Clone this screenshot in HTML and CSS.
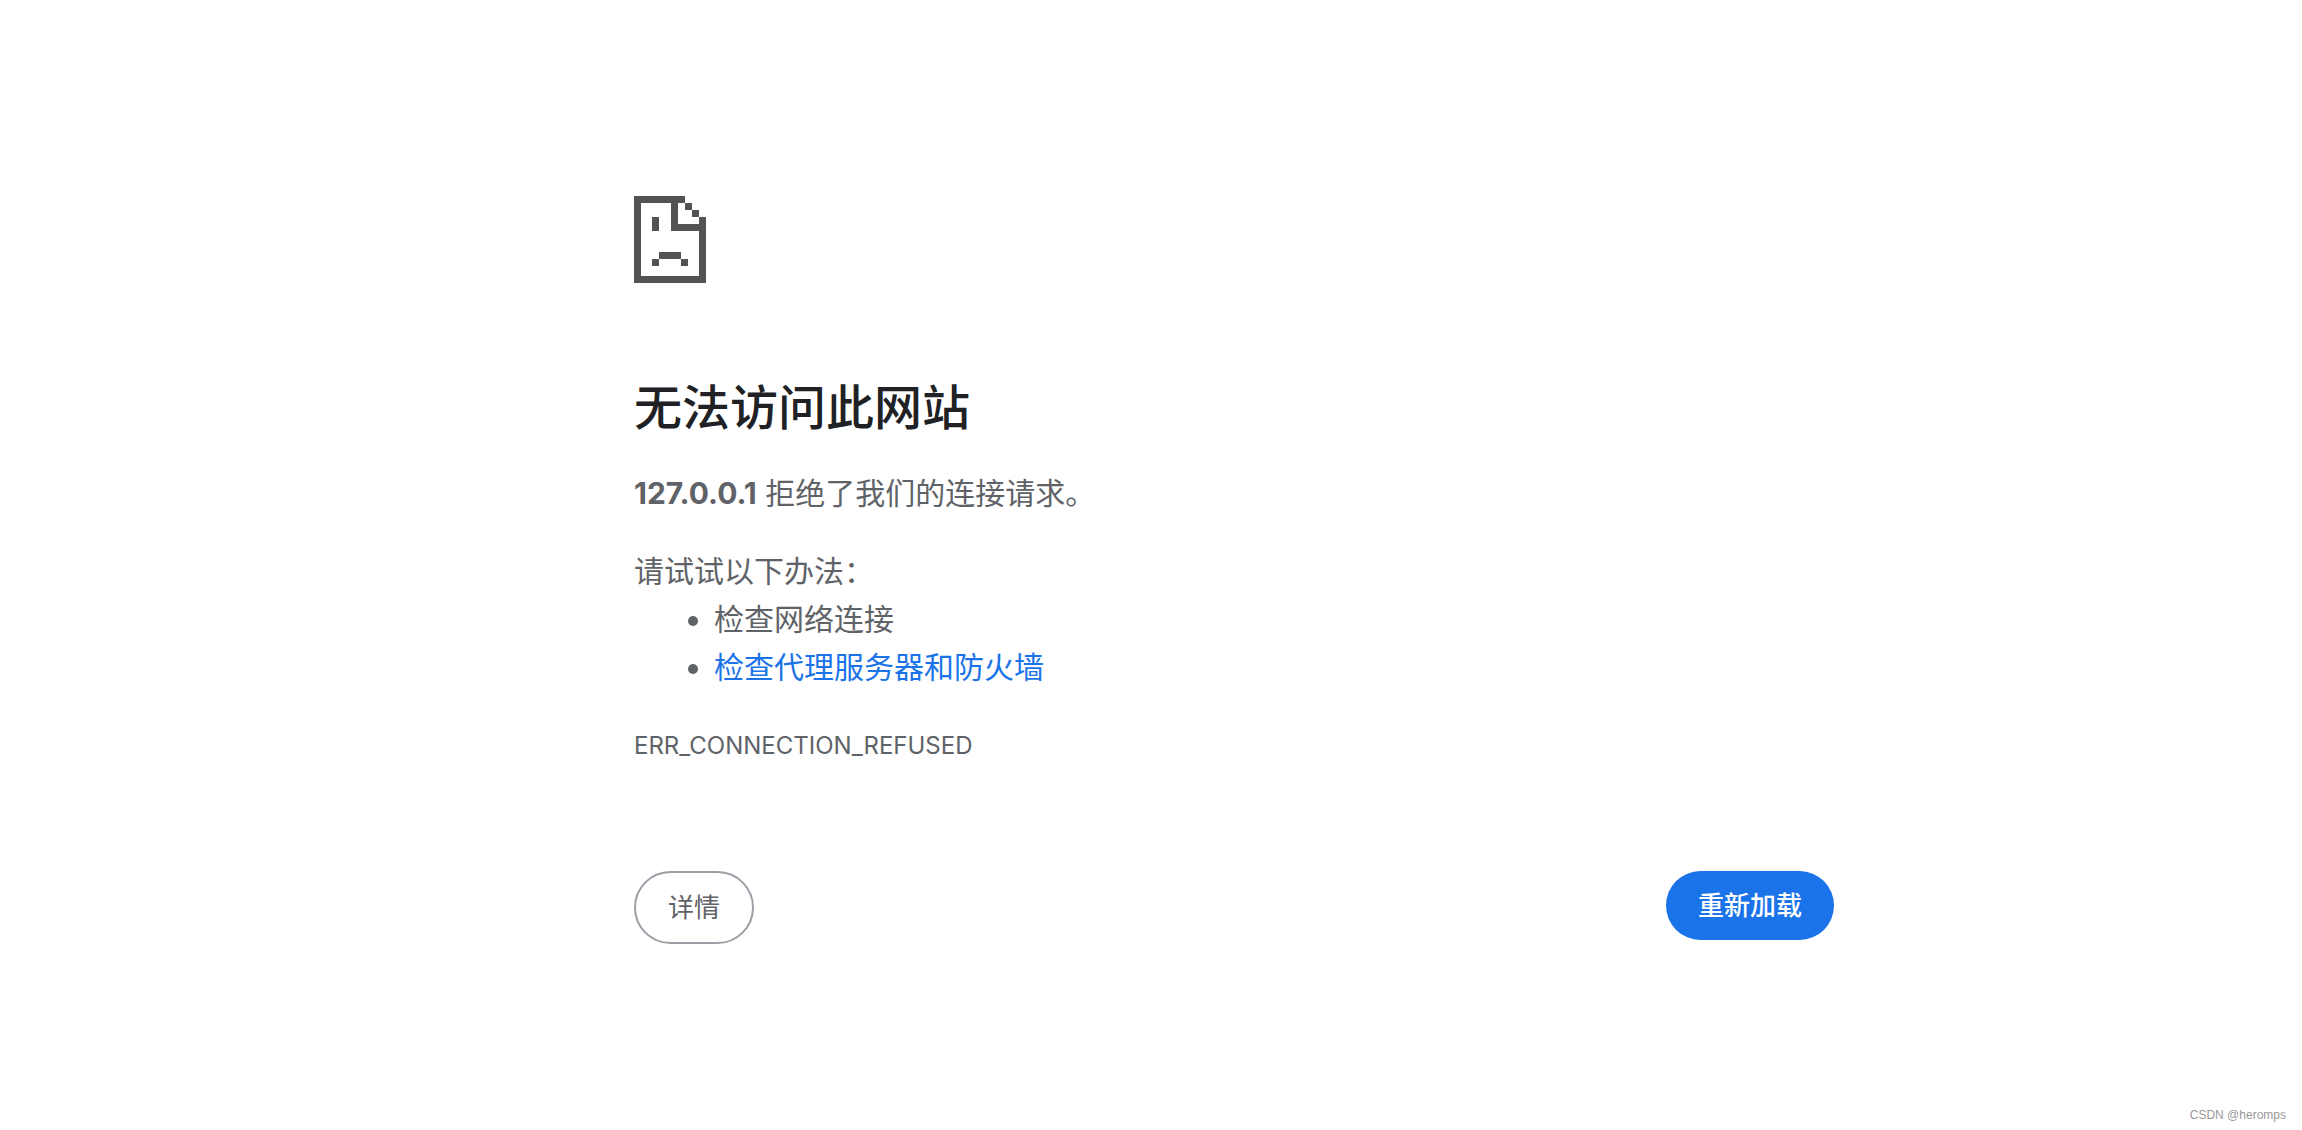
FILE: index.html
```html
<!DOCTYPE html>
<html lang="zh-CN">
<head>
  <meta charset="UTF-8">
  <meta name="viewport" content="width=device-width, initial-scale=1.0">
  <title>127.0.0.1</title>
  <link rel="stylesheet" href="styles.css">
</head>
<body>
  <main class="error-page">
    <svg class="icon" viewBox="0 0 216 261" fill="#535353" shape-rendering="crispEdges" aria-hidden="true">
      <!-- 纸张边框 -->
      <path d="M0 0H153V21H21V240H195V105H111V21H132V84H195V63H216V261H0Z"/>
      <!-- 折角 -->
      <path d="M153 21H174V42H153ZM174 42H195V63H174Z"/>
      <!-- 眼睛和嘴 -->
      <path d="M54 63H75V105H54ZM75 168H141V189H75ZM54 189H75V210H54ZM141 189H162V210H141Z"/>
    </svg>

    <h1>无法访问此网站</h1>
    <p class="summary"><strong>127.0.0.1</strong> 拒绝了我们的连接请求。</p>

    <div class="suggestions">
      <p>请试试以下办法：</p>
      <ul>
        <li>检查网络连接</li>
        <li><a href="#buttons">检查代理服务器和防火墙</a></li>
      </ul>
    </div>

    <div class="error-code">ERR_CONNECTION_REFUSED</div>

    <div class="buttons" id="buttons">
      <button type="button" class="details-button">详情</button>
      <button type="button" class="reload-button">重新加载</button>
    </div>
  </main>
  <div class="watermark">CSDN @heromps</div>
</body>
</html>
```
FILE: styles.css
```css
body {
  margin: 0;
  background: #fff;
  color: #5f6368;
  font-family: Inter, "Noto Sans CJK SC", sans-serif;
  font-size: 30px;
  line-height: 48px;
}

.error-page {
  max-width: 1200px;
  margin: 0 auto;
  padding: 196px 0 0 166px;
}

.icon {
  display: block;
  width: 72px;
  height: 87px;
}

h1 {
  margin: 95px 0 31px;
  color: #202124;
  font-size: 48px;
  font-weight: 500;
  line-height: 60px;
}

p {
  margin: 0;
}

.summary {
  margin-bottom: 30px;
}

ul {
  margin: 0;
  padding-left: 80px;
}

a {
  color: #1a73e8;
  text-decoration: none;
}

.error-code {
  margin-top: 36px;
  font-size: 24px;
  line-height: 38px;
}

.buttons {
  display: flex;
  justify-content: space-between;
  align-items: flex-start;
  margin-top: 106px;
}

button {
  padding: 16px 32px;
  border: 0;
  border-radius: 40px;
  font-family: inherit;
  font-size: 26px;
  line-height: 37px;
  cursor: pointer;
}

.details-button {
  border: 2px solid #9aa0a6;
  background: #fff;
  color: #5f6368;
}

.reload-button {
  background: #1a73e8;
  color: #fff;
  font-weight: 500;
}

/* 右下角水印 */
.watermark {
  position: absolute;
  right: 16px;
  bottom: 7px;
  color: #999;
  font-family: "Liberation Sans", Arial, sans-serif;
  font-size: 12px;
  line-height: 16px;
}
```
